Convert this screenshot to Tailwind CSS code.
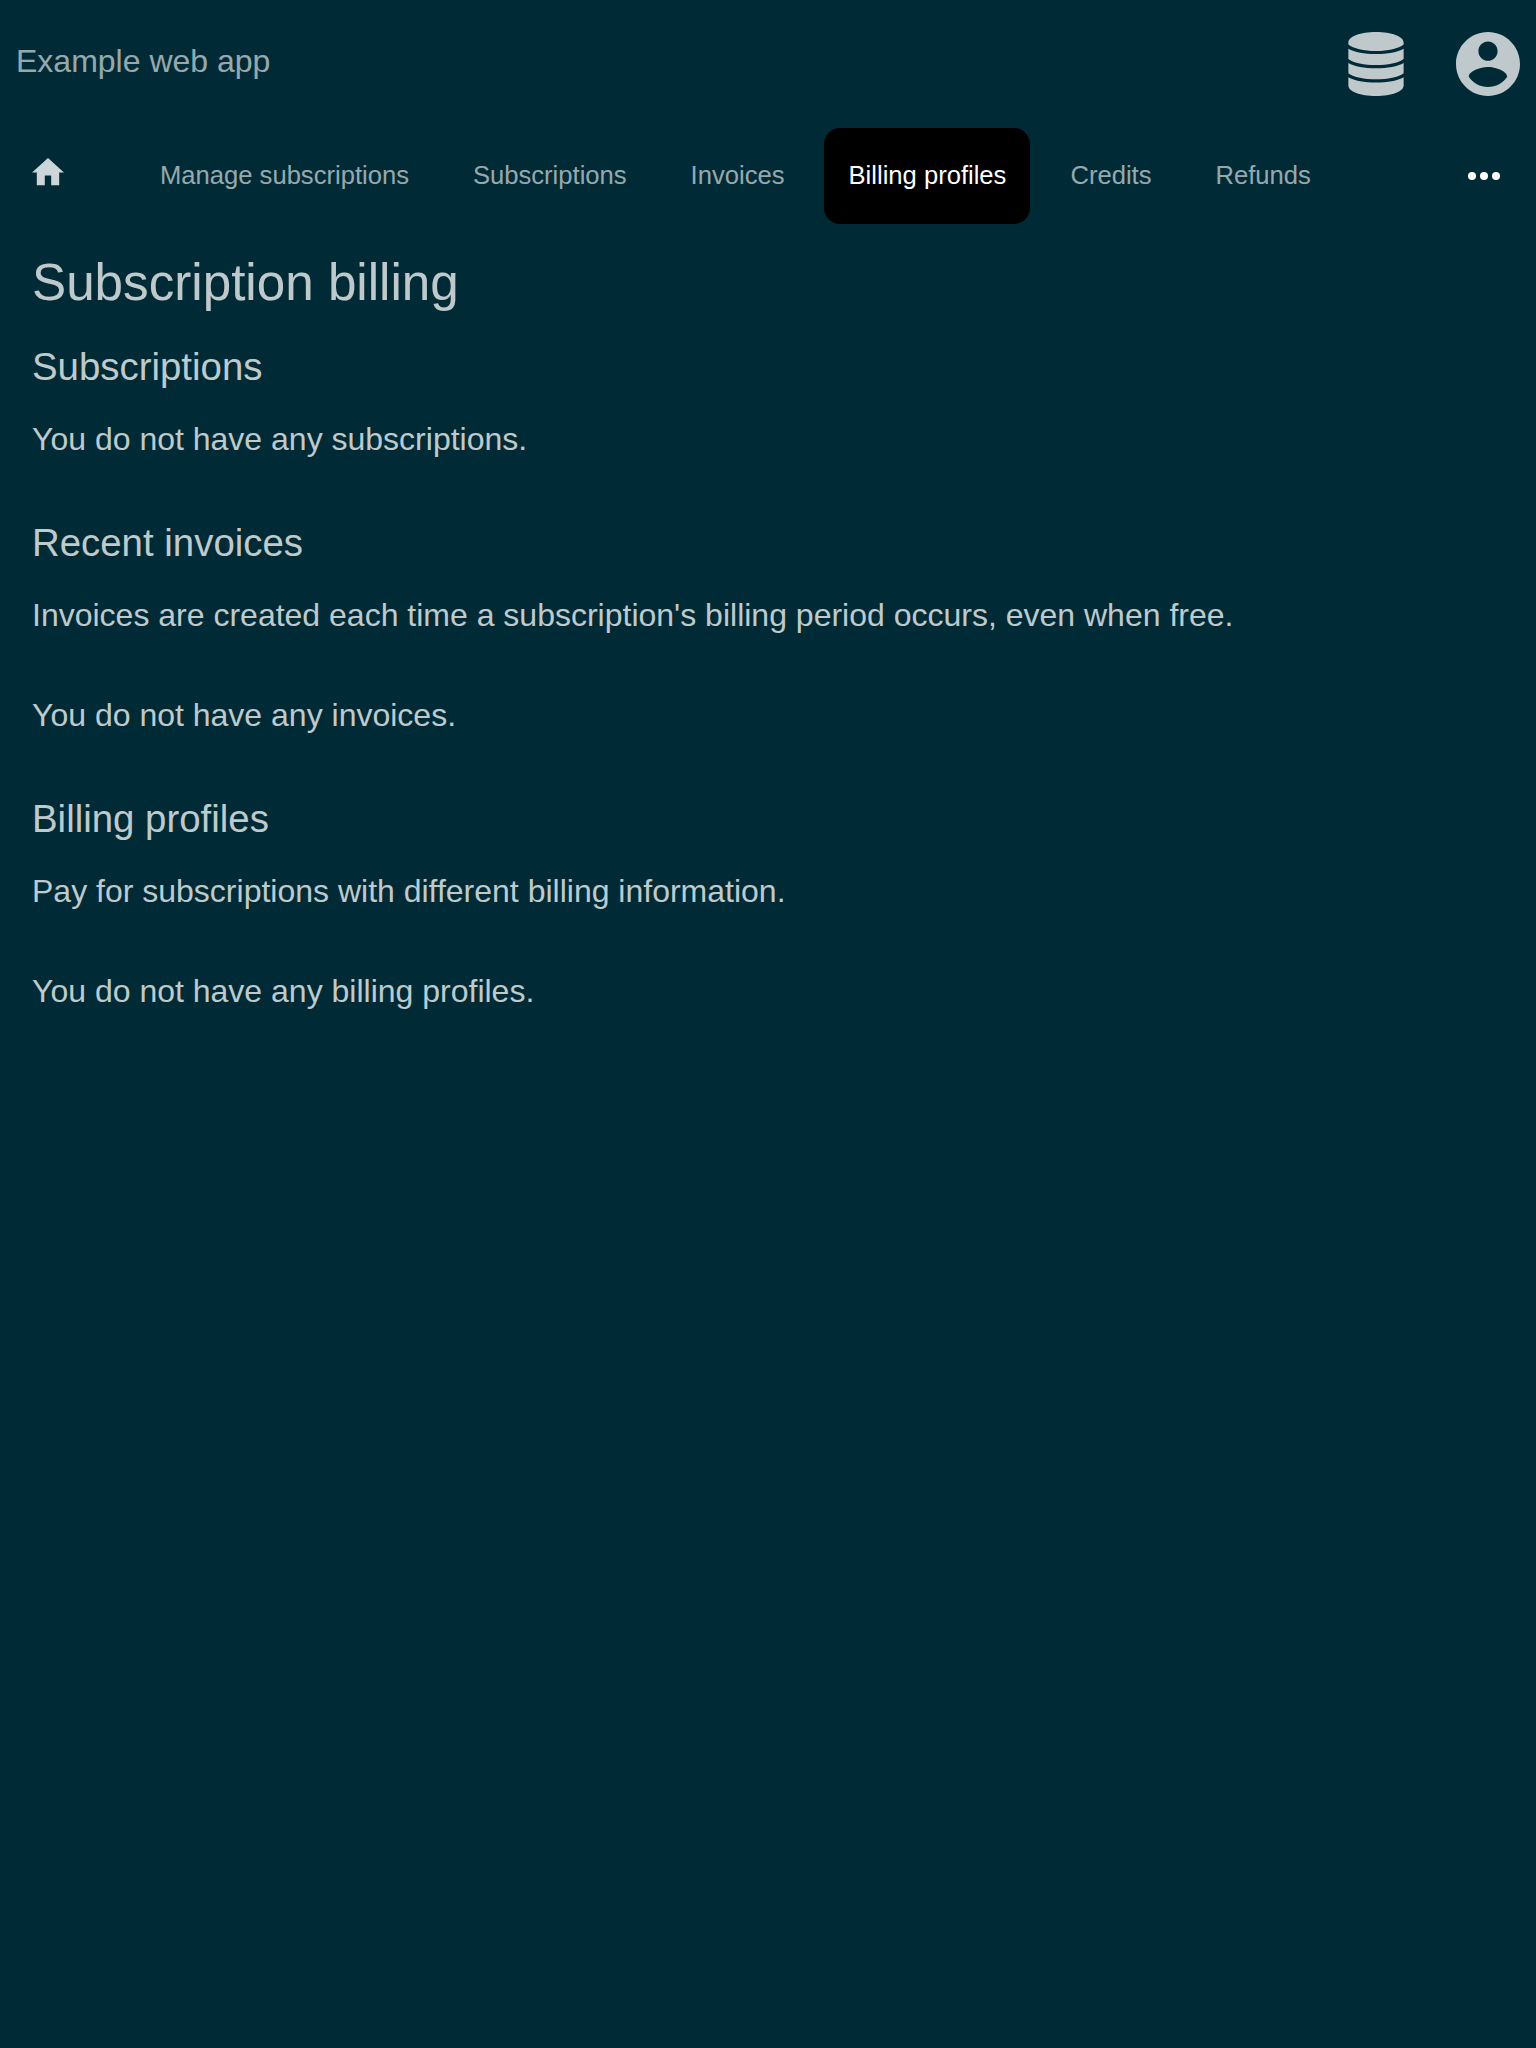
<!DOCTYPE html>
<html lang="en">
<head>
<meta charset="utf-8">
<title>Subscription billing</title>
<script src="https://cdn.jsdelivr.net/npm/@tailwindcss/browser@4"></script>
</head>
<body class="min-h-screen bg-[#002b36] font-['Liberation_Sans',Arial,sans-serif] text-[32px] leading-9 text-white/75">
<header class="flex h-32 items-start justify-between px-4">
  <div class="pt-[43px] text-white/60">Example web app</div>
  <div class="flex items-center gap-[52px] pt-8">
    <svg class="h-16 w-14" viewBox="0 0 448 512" fill="currentColor"><path d="M3 84C3 36 100 0 224 0s221 36 221 84v16c-40 32-122 52-221 52S43 132 3 100zM3 133c48 28 127 43 221 43s173-15 221-43v82c-44 32-127 49-221 49S47 247 3 215zM3 247c48 28 127 43 221 43s173-15 221-43v82c-44 32-127 49-221 49S47 361 3 329zM3 361c48 28 127 43 221 43s173-15 221-43v67c0 48-97 84-221 84S3 476 3 428z"/></svg>
    <svg class="h-16 w-16" viewBox="2 2 20 20" fill="currentColor"><path d="M12 2C6.48 2 2 6.48 2 12s4.48 10 10 10 10-4.48 10-10S17.52 2 12 2zm0 3c1.66 0 3 1.34 3 3s-1.34 3-3 3-3-1.34-3-3 1.34-3 3-3zm0 14.2c-2.5 0-4.71-1.28-6-3.22.03-1.99 4-3.08 6-3.08 1.99 0 5.97 1.09 6 3.08-1.29 1.94-3.5 3.22-6 3.22z"/></svg>
  </div>
</header>
<nav class="flex h-24 items-center pr-9 pl-8 text-[25.6px] leading-7 text-white/60">
  <a class="mr-[72px] pb-2"><svg class="h-[27.2px] w-8 text-white/80" viewBox="2 3 20 17" fill="currentColor"><path d="M10 20v-6h4v6h5v-8h3L12 3 2 12h3v8z"/></svg></a>
  <div class="flex h-24 gap-4">
    <a class="flex items-center rounded-2xl px-6 pb-0.5">Manage subscriptions</a>
    <a class="flex items-center rounded-2xl px-6 pb-0.5">Subscriptions</a>
    <a class="flex items-center rounded-2xl px-6 pb-0.5">Invoices</a>
    <a class="-ml-[0.4px] flex items-center rounded-2xl bg-black pr-6 pb-0.5 pl-[24.4px] text-white">Billing profiles</a>
    <a class="flex items-center rounded-2xl px-6 pb-0.5">Credits</a>
    <a class="flex items-center rounded-2xl px-6 pb-0.5">Refunds</a>
  </div>
  <svg class="ml-auto h-2 w-8 text-white" viewBox="0 0 32 8" fill="currentColor"><circle cx="4" cy="4" r="4"/><circle cx="16" cy="4" r="4"/><circle cx="28" cy="4" r="4"/></svg>
</nav>
<main class="px-8 pt-[30px]">
  <h1 class="mb-[33px] text-[51.2px] leading-[58px]">Subscription billing</h1>
  <section class="mb-16">
    <h2 class="mb-8 text-[38.4px] leading-11">Subscriptions</h2>
    <p>You do not have any subscriptions.</p>
  </section>
  <section class="mb-16">
    <h2 class="mb-8 text-[38.4px] leading-11">Recent invoices</h2>
    <p class="mb-16">Invoices are created each time a subscription's billing period occurs, even when free.</p>
    <p>You do not have any invoices.</p>
  </section>
  <section>
    <h2 class="mb-8 text-[38.4px] leading-11">Billing profiles</h2>
    <p class="mb-16">Pay for subscriptions with different billing information.</p>
    <p>You do not have any billing profiles.</p>
  </section>
</main>
</body>
</html>
